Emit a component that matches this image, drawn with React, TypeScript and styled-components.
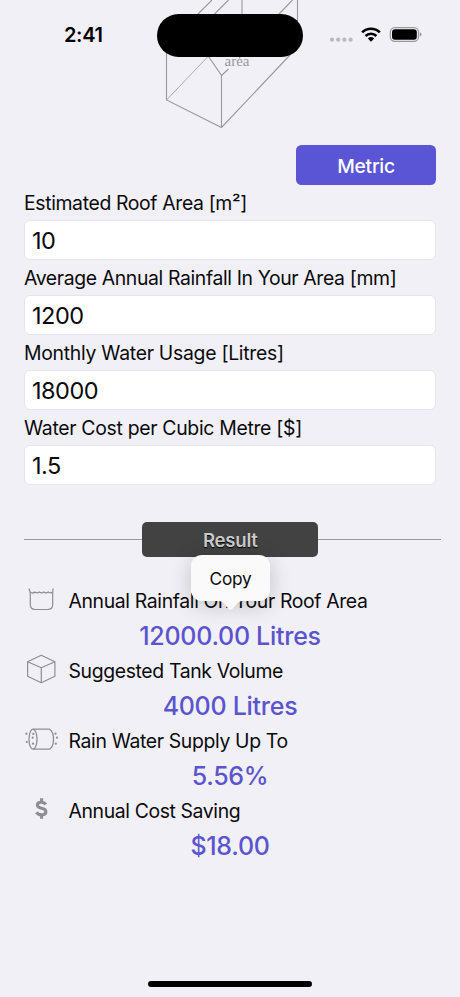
import React from "react";
import styled, { createGlobalStyle } from "styled-components";

const GlobalStyle = createGlobalStyle`
  * { box-sizing: border-box; }
  body {
    margin: 0;
    background: #f1f0f6;
    font-family: Inter, "Liberation Sans", sans-serif;
    color: #0a0a0c;
  }
`;

const Screen = styled.div`
  position: relative;
  width: 460px;
  height: 997px;
  overflow: hidden;
  background: #f1f0f6;
  display: flex;
  flex-direction: column;
`;

const Hero = styled.div`
  height: 145px;
  flex: none;
  svg { display: block; }
`;

const StatusBar = styled.div`
  position: absolute;
  inset: 13px 0 auto 0;
  height: 43px;
`;

const Clock = styled.div`
  position: absolute;
  left: 64px;
  top: 10px;
  font-size: 20px;
  line-height: 24px;
  font-weight: 600;
  letter-spacing: -0.35px;
  color: #000;
`;

const Island = styled.div`
  position: absolute;
  left: 157px;
  top: 0.5px;
  width: 146px;
  height: 43px;
  border-radius: 22px;
  background: #000;
`;

const StatusIcons = styled.svg`
  position: absolute;
  left: 326px;
  top: 9px;
`;

const Form = styled.div`
  padding: 0 24px;
  display: flex;
  flex-direction: column;
`;

const UnitButton = styled.button`
  align-self: flex-end;
  width: 140px;
  height: 40px;
  border: 0;
  border-radius: 5.5px;
  background: #5955d5;
  color: #fff;
  font: 500 19.3px/40px Inter, sans-serif;
  letter-spacing: -0.25px;
  padding: 1px 0 0;
`;

const Field = styled.label`
  display: block;
  height: 75px;
`;

const FieldLabel = styled.span<{ $spacing: number }>`
  display: block;
  height: 35px;
  padding-top: 6px;
  font-size: 19.4px;
  line-height: 24px;
  letter-spacing: ${(p) => p.$spacing}px;
  white-space: nowrap;
`;

const Input = styled.input`
  display: block;
  width: 412px;
  height: 40px;
  padding: 0 7px;
  border: 1px solid #e6e5ea;
  border-radius: 6px;
  background: #fff;
  font: 400 23.5px/28px Inter, sans-serif;
  letter-spacing: -0.5px;
  color: #0a0a0c;
  outline: none;
`;

const Divider = styled.div`
  display: flex;
  align-items: center;
  margin: 37px 19px 0 24px;
  height: 35px;
`;

const Rule = styled.div<{ $width: number }>`
  width: ${(p) => p.$width}px;
  height: 1px;
  background: #98979c;
`;

const ResultButton = styled.div`
  width: 176px;
  height: 35px;
  border-radius: 5px;
  background: #424242;
  color: #cbcbcb;
  text-align: center;
  font-weight: 600;
  font-size: 18.6px;
  line-height: 36px;
  letter-spacing: -0.25px;
  text-shadow: 0 1px 1px #000;
`;

const Results = styled.div`
  padding: 23px 24px 0;
`;

const ResultRow = styled.div`
  height: 70px;
`;

const ResultHead = styled.div<{ $spacing: number }>`
  display: flex;
  height: 41px;
  font-size: 19.4px;
  line-height: 24px;
  letter-spacing: ${(p) => p.$spacing}px;
  white-space: nowrap;
  svg { flex: none; display: block; }
  span { padding: 9px 0 0 9.5px; }
`;

const ResultValue = styled.div`
  text-align: center;
  font-size: 25px;
  line-height: 30px;
  font-weight: 460;
  letter-spacing: -0.28px;
  color: #5a54ce;
`;

const CopyMenu = styled.div`
  position: absolute;
  left: 191px;
  top: 555px;
  width: 79px;
  height: 46px;
  border-radius: 11px;
  background: #fafafb;
  box-shadow: 0 4px 22px rgba(0, 0, 0, 0.2);
  text-align: center;
  font-size: 17.3px;
  line-height: 47px;
  letter-spacing: -0.25px;
  svg { position: absolute; left: 28px; top: 45.5px; }
`;

const HomeIndicator = styled.div`
  position: absolute;
  left: 148px;
  top: 981px;
  width: 164px;
  height: 6px;
  border-radius: 3px;
  background: #000;
`;

const AreaCaption = styled.text`
  font-family: "Liberation Serif", serif;
  font-size: 15px;
  fill: #99989d;
`;

const fields = [
  { label: "Estimated Roof Area [m²]", value: "10", spacing: -0.36 },
  { label: "Average Annual Rainfall In Your Area [mm]", value: "1200", spacing: -0.37 },
  { label: "Monthly Water Usage [Litres]", value: "18000", spacing: -0.28 },
  { label: "Water Cost per Cubic Metre [$]", value: "1.5", spacing: -0.31 },
];

const RainIcon = () => (
  <svg width="35" height="40" viewBox="0 3 35 40" fill="none" stroke="#8e8d92" strokeWidth="1.2">
    <path d="M5 11.5 6.3 16v11.5q0 5 5 5h12.400q5 0 5-5V16L29 11.500M6.300 15q2.500 2 4.500 0q2.300 1.800 4.500 0q2.200 1.800 4.500 0q2.200 1.800 4.500 0q2.200 1.800 4.400 0" />
  </svg>
);

const BoxIcon = () => (
  <svg width="35" height="40" viewBox="0 2.3 35 40" fill="none" stroke="#8e8d92" strokeWidth="1.2" strokeLinejoin="round">
    <path d="M17.300 7.500 30.900 14v14.500l-13.600 6.500-13.700-6.500V14ZM3.600 14l13.700 6 13.600-6M17.300 20v15" />
  </svg>
);

const BarrelIcon = () => (
  <svg width="35" height="40" viewBox="0 -0.7 35 40" fill="none" stroke="#8e8d92" strokeWidth="1.300">
    <ellipse cx="9" cy="18.500" rx="4" ry="10" />
    <path d="M9 8.500h16.500c2.200 1.300 4 5 4 10s-1.800 8.700-4 10H9" />
    <g fill="#8e8d92" stroke="none">
      {[[2.400, 13], [2.800, 21.300], [9.300, 13.200], [8.700, 17], [9, 23], [31.500, 13], [33, 17], [31.800, 23]].map(([x, y]) => (
        <circle key={`${x}-${y}`} cx={x} cy={y} r="1.100" />
      ))}
    </g>
  </svg>
);

const DollarIcon = () => (
  <svg width="35" height="40" viewBox="0 -0.8 35 40" fill="none" stroke="#8e8d92" strokeWidth="3.100">
    <path d="M21.800 13.700c-1-1.600-2.500-2.300-4.500-2.300-2.500 0-3.900 1.200-3.900 2.900 0 4.500 8.500 2 8.500 6.600 0 2.100-1.900 3.100-4.300 3.100-2.300 0-4.200-.8-5.200-2.400M17.600 7.500v4M17.600 24v4" />
  </svg>
);

const results = [
  { label: "Annual Rainfall On Your Roof Area", value: "12000.00 Litres", Icon: RainIcon, spacing: -0.36 },
  { label: "Suggested Tank Volume", value: "4000 Litres", Icon: BoxIcon, spacing: -0.36 },
  { label: "Rain Water Supply Up To", value: "5.56%", Icon: BarrelIcon, spacing: -0.35 },
  { label: "Annual Cost Saving", value: "$18.00", Icon: DollarIcon, spacing: -0.38 },
];

export default function App() {
  return (
    <>
      <GlobalStyle />
      <Screen>
        <Hero>
          <svg width="460" height="145" viewBox="0 0 460 145" fill="none" stroke="#99989d" strokeWidth="1.1">
            <path d="M166.500 45V100L221.500 127.500 290 55M207.500 55 221.500 75.500V127.500M221.500 75.500 228.500 69M198 14 212 0M214.500 14 228.500 0M242 0V14M279 14 292.500 0M297.500 0V22M239 56 240 58.500" />
            <path d="M166.500 100 207.500 57" strokeWidth="0.8" />
            <AreaCaption x="224.500" y="66" stroke="none">area</AreaCaption>
          </svg>
        </Hero>

        <Form>
          <UnitButton>Metric</UnitButton>
          {fields.map((f) => (
            <Field key={f.label}>
              <FieldLabel $spacing={f.spacing}>{f.label}</FieldLabel>
              <Input defaultValue={f.value} />
            </Field>
          ))}
        </Form>

        <Divider>
          <Rule $width={118.5} />
          <ResultButton>Result</ResultButton>
          <Rule $width={123} />
        </Divider>

        <Results>
          {results.map(({ label, value, Icon, spacing }) => (
            <ResultRow key={label}>
              <ResultHead $spacing={spacing}>
                <Icon />
                <span>{label}</span>
              </ResultHead>
              <ResultValue>{value}</ResultValue>
            </ResultRow>
          ))}
        </Results>

        <CopyMenu>
          Copy
          <svg width="23" height="10" viewBox="0 0 23 10" fill="#fafafb">
            <path d="M0 0h23c-3 .3-4.500 2-6 4l-3.500 3.700q-2 2-4 0L6 4C4.500 2 3 .3 0 0Z" />
          </svg>
        </CopyMenu>

        <StatusBar>
          <Clock>2:41</Clock>
          <Island />
          <StatusIcons width="100" height="24" viewBox="0 0 100 24">
            <g fill="#bab9be">
              <circle cx="6" cy="17.700" r="2.100" />
              <circle cx="12.200" cy="17.700" r="2.100" />
              <circle cx="18.400" cy="17.700" r="2.100" />
              <circle cx="24.600" cy="17.700" r="2.100" />
            </g>
            <g fill="none" stroke="#000" strokeWidth="2.700">
              <path d="M36.200 10.400a12.400 12.400 0 0 1 17.600 0" />
              <path d="M39.600 14a7.600 7.600 0 0 1 10.800 0" />
            </g>
            <path d="M45 19.700 41.900 16.500a4.500 4.500 0 0 1 6.200 0Z" fill="#000" />
            <rect x="64.300" y="5.600" width="28.200" height="13.800" rx="4.600" fill="none" stroke="#98989a" strokeWidth="1.200" />
            <rect x="66" y="7.300" width="24.800" height="10.400" rx="3" fill="#000" />
            <path d="M93.800 10.200q1.800.8 1.800 2.200t-1.800 2.200Z" fill="#98989a" />
          </StatusIcons>
        </StatusBar>
        <HomeIndicator />
      </Screen>
    </>
  );
}
